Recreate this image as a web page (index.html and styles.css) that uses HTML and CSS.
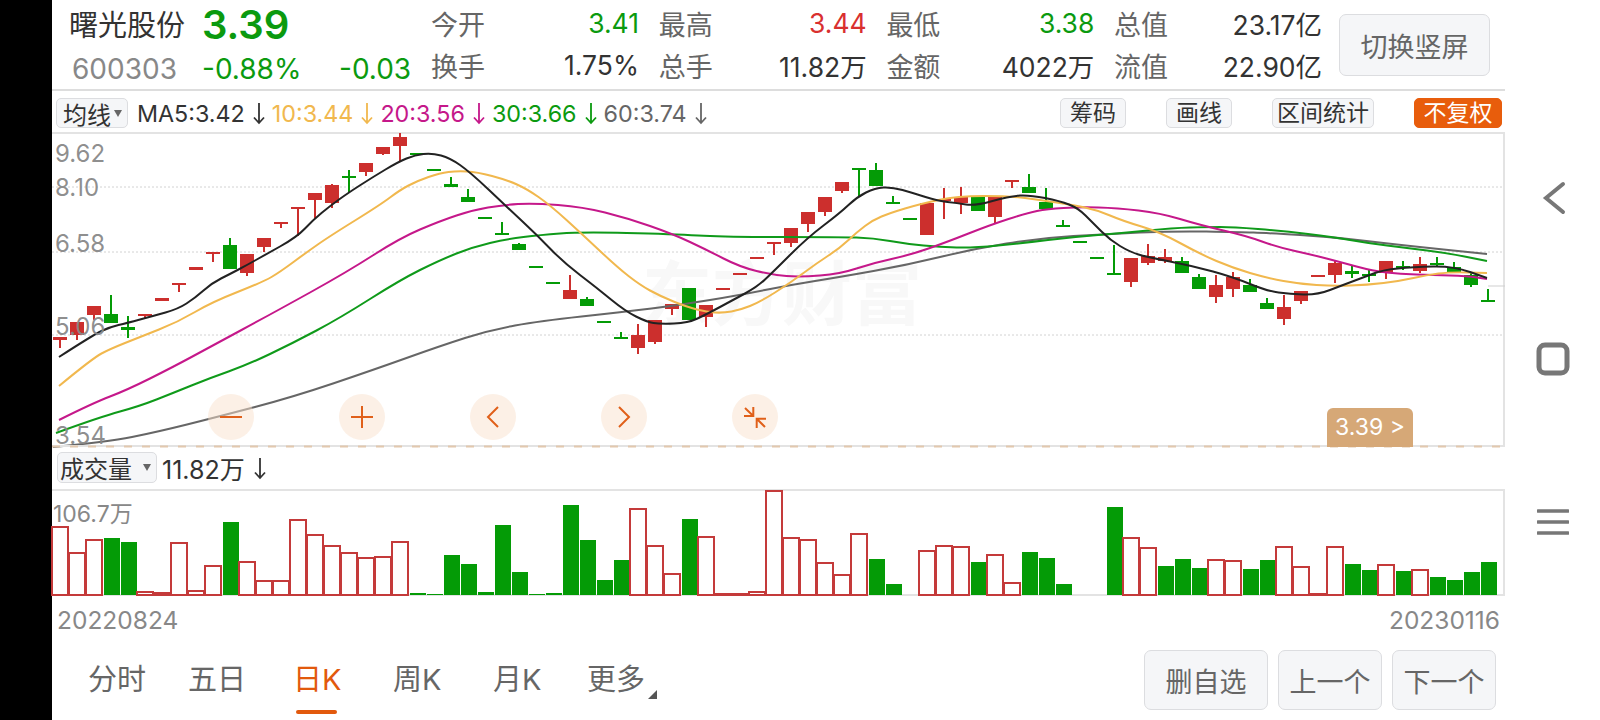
FILE: index.html
```html
<!DOCTYPE html>
<html lang="zh">
<head>
    <meta charset="utf-8">
    <title>曙光股份 600303</title>
    <link rel="stylesheet" href="styles.css">
</head>
<body>
    <svg class="defs">
        <symbol id="down" viewBox="0 0 12 24">
            <path d="M6 2V22M1 16.5L6 22L11 16.5" fill="none" stroke="currentColor" stroke-width="1.8"/>
        </symbol>
    </svg>
    <div class="edge"></div>
    <main class="main">
        <header class="quote">
            <div class="title">
                <div class="name">曙光股份</div>
                <div class="price">3.39</div>
                <div></div>
                <div class="code">600303</div>
                <div class="change">-0.88%</div>
                <div class="change">-0.03</div>
            </div>
            <div class="stats">
                <div class="stat"><span class="label">今开</span><span class="green">3.41</span></div>
                <div class="stat"><span class="label">最高</span><span class="red">3.44</span></div>
                <div class="stat"><span class="label">最低</span><span class="green">3.38</span></div>
                <div class="stat"><span class="label">总值</span><span>23.17亿</span></div>
                <div class="stat"><span class="label">换手</span><span>1.75%</span></div>
                <div class="stat"><span class="label">总手</span><span>11.82万</span></div>
                <div class="stat"><span class="label">金额</span><span>4022万</span></div>
                <div class="stat"><span class="label">流值</span><span>22.90亿</span></div>
            </div>
            <button class="btn switch">切换竖屏</button>
        </header>

        <div class="ma-row">
            <div class="pick pick-ma">均线<i class="caret"></i></div>
            <span class="ma ma5">MA5:3.42<svg class="arrow"><use href="#down"/></svg></span>
            <span class="ma ma10">10:3.44<svg class="arrow"><use href="#down"/></svg></span>
            <span class="ma ma20">20:3.56<svg class="arrow"><use href="#down"/></svg></span>
            <span class="ma ma30">30:3.66<svg class="arrow"><use href="#down"/></svg></span>
            <span class="ma ma60">60:3.74<svg class="arrow"><use href="#down"/></svg></span>
            <div class="tools">
                <div class="tool tool-short">筹码</div>
                <div class="tool tool-short">画线</div>
                <div class="tool tool-long">区间统计</div>
                <div class="tool tool-on">不复权</div>
            </div>
        </div>

        <div class="kline">
            <svg id="kline" width="1453" height="315"></svg>
            <div class="zooms">
                <div class="zoom"><svg viewBox="0 0 24 24"><path d="M1 12H23"/></svg></div>
                <div class="zoom"><svg viewBox="0 0 24 24"><path d="M1 12H23M12 1V23"/></svg></div>
                <div class="zoom"><svg viewBox="0 0 24 24"><path d="M17 2L7 12L17 22"/></svg></div>
                <div class="zoom"><svg viewBox="0 0 24 24"><path d="M7 2L17 12L7 22"/></svg></div>
                <div class="zoom"><svg viewBox="0 0 24 24"><path d="M2 3L10.3 11M1 11H10.3V2M22 22L13.7 13.7M23 13.7H13.7V23"/></svg></div>
            </div>
            <div class="last-price">3.39 &gt;</div>
        </div>

        <div class="vol-row">
            <div class="pick pick-vol">成交量<i class="caret"></i></div>
            <span class="vol-now">11.82万<svg class="arrow"><use href="#down"/></svg></span>
        </div>

        <div class="volume">
            <svg id="volume" width="1453" height="107"></svg>
            <div class="vol-max">106.7万</div>
        </div>

        <div class="dates">
            <span>20220824</span>
            <span>20230116</span>
        </div>

        <div class="bottom">
            <nav class="tabs">
                <a class="tab tab-a">分时</a>
                <a class="tab tab-b">五日</a>
                <a class="tab tab-c active">日K</a>
                <a class="tab tab-d">周K</a>
                <a class="tab tab-e">月K</a>
                <a class="tab more">更多</a>
            </nav>
            <div class="actions">
                <button class="btn del">删自选</button>
                <button class="btn step">上一个</button>
                <button class="btn step">下一个</button>
            </div>
        </div>
    </main>
    <aside class="sysnav">
        <svg width="24" height="36" viewBox="0 0 24 36"><path d="M21 4L4 18L21 32"/></svg>
        <svg width="34" height="34" viewBox="0 0 34 34"><rect x="3" y="3" width="28" height="28" rx="6"/></svg>
        <svg width="32" height="28" viewBox="0 0 32 28"><path d="M1 3H31M1 14H31M1 25H31"/></svg>
    </aside>
    <script src="chart.js"></script>
</body>
</html>
```

FILE: styles.css
```css
* {
    box-sizing: border-box;
}

html, body {
    height: 100%;
    overflow: hidden;
}

body {
    margin: 0;
    display: flex;
    width: 1600px;
    height: 720px;
    background: #fff;
    color: #333;
    font-family: Inter, "Noto Sans CJK SC", sans-serif;
}

.defs {
    position: absolute;
    width: 0;
    height: 0;
}

.edge {
    width: 52px;
    background: #000;
}

.main {
    width: 1453px;
    display: flex;
    flex-direction: column;
}

.green {
    color: #0b9a0f;
}

.red {
    color: #d9302f;
}

.btn {
    background: #f5f6f8;
    border: 1px solid #dcdde0;
    border-radius: 7px;
    color: #666;
    font-family: inherit;
    padding: 0;
}

/* header */
.quote {
    height: 91px;
    display: flex;
    border-bottom: 2px solid #ddd;
}

.title {
    width: 379px;
    padding-left: 17px;
    display: grid;
    grid-template-columns: 133px 137px 1fr;
    grid-template-rows: 50px 38px;
    align-items: center;
}

.name {
    font-size: 29px;
    line-height: 1;
}

.price {
    font-size: 40px;
    font-weight: 600;
    line-height: 1;
    color: #0b9a0f;
}

.code {
    padding-left: 3px;
    font-size: 28px;
    color: #888;
}

.change {
    font-size: 28px;
    color: #0b9a0f;
}

.stats {
    width: 890px;
    display: grid;
    grid-template-columns: repeat(4, 208px);
    grid-auto-rows: 42px;
    column-gap: 19.7px;
    padding-top: 2px;
}

.stat {
    display: flex;
    justify-content: space-between;
    align-items: center;
    font-size: 26.5px;
}

.label {
    font-size: 27px;
    color: #666;
}

.switch {
    width: 151px;
    height: 62px;
    margin: 14px 0 0 18px;
    font-size: 27px;
}

/* moving averages row */
.ma-row {
    height: 41px;
    display: flex;
    align-items: center;
    padding: 3px 3px 0 4px;
}

.pick {
    background: #f5f6f8;
    border: 1px solid #dcdde0;
    border-radius: 5px;
    display: flex;
    align-items: center;
}

.pick-ma {
    width: 72px;
    height: 30px;
    margin-right: 9px;
    padding-left: 6px;
    font-size: 24px;
}

.caret {
    width: 0;
    height: 0;
    margin-left: 3px;
    border: 4px solid transparent;
    border-top: 7px solid #666;
    border-bottom: 0;
}

.ma {
    display: flex;
    align-items: center;
    gap: 8px;
    margin-right: 7px;
    font-size: 23.3px;
}

.arrow {
    width: 12px;
    height: 24px;
}

.ma5 {
    color: #333;
}

.ma10 {
    color: #f1b84e;
}

.ma20 {
    color: #c5188a;
}

.ma30 {
    color: #0b9a0f;
}

.ma60 {
    color: #666;
}

.tools {
    margin-left: auto;
    display: flex;
    gap: 40px;
}

.tool {
    height: 30px;
    background: #f5f6f8;
    border: 1px solid #dcdde0;
    border-radius: 5px;
    font-size: 23px;
    line-height: 28px;
    text-align: center;
    white-space: nowrap;
}

.tool-short {
    width: 66px;
}

.tool-long {
    width: 102px;
}

.tool-on {
    width: 88px;
    background: #e85d0c;
    border-color: #e85d0c;
    color: #fff;
}

/* k line chart */
.kline {
    position: relative;
    height: 315px;
}

.kline svg, .volume svg {
    display: block;
    overflow: visible;
}

.zooms {
    position: absolute;
    left: 156px;
    top: 262px;
    display: flex;
    gap: 85px;
}

.zoom {
    width: 46px;
    height: 46px;
    border-radius: 50%;
    background: rgba(250, 225, 205, 0.5);
    display: flex;
    align-items: center;
    justify-content: center;
}

.zoom svg {
    width: 24px;
    height: 24px;
    fill: none;
    stroke: #e0601a;
    stroke-width: 2;
}

.last-price {
    position: absolute;
    left: 1275px;
    top: 276px;
    width: 86px;
    height: 39px;
    background: #d6a877;
    border-radius: 6px 6px 0 0;
    color: #fff;
    font-size: 23px;
    line-height: 38px;
    text-align: center;
}

/* volume chart */
.vol-row {
    height: 42px;
    display: flex;
    align-items: center;
    gap: 5px;
    padding: 0 0 1px 5px;
}

.pick-vol {
    width: 100px;
    height: 31px;
    padding-left: 2px;
    font-size: 24px;
}

.pick-vol .caret {
    margin-left: 11px;
}

.vol-now {
    display: flex;
    align-items: center;
    gap: 9px;
    font-size: 25px;
}

.volume {
    position: relative;
    height: 107px;
}

.vol-max {
    position: absolute;
    left: 1px;
    top: 6px;
    font-size: 23px;
    color: #888;
}

.dates {
    display: flex;
    justify-content: space-between;
    padding: 8px 5px 0 5px;
    font-size: 24.5px;
    line-height: 32px;
    color: #888;
}

/* bottom tabs */
.bottom {
    flex: 1;
    display: flex;
    justify-content: space-between;
}

.tabs {
    position: relative;
    flex: 1;
    font-size: 29px;
    color: #666;
}

.tab {
    position: absolute;
    top: 23px;
    line-height: 42px;
    white-space: nowrap;
}

.tab-a {
    left: 36px;
}

.tab-b {
    left: 136px;
}

.tab-c {
    left: 241px;
}

.tab-d {
    left: 341px;
}

.tab-e {
    left: 441px;
}

.more {
    left: 535px;
}

.more::after {
    content: "";
    position: absolute;
    right: -12px;
    bottom: 2px;
    border-left: 9px solid transparent;
    border-bottom: 9px solid #555;
}

.active {
    color: #e2590d;
}

.active::after {
    content: "";
    position: absolute;
    left: 3px;
    top: 51px;
    width: 41px;
    height: 4px;
    border-radius: 2px;
    background: #e2590d;
}

.actions {
    display: flex;
    gap: 10px;
    margin-right: 9px;
    padding-top: 14px;
}

.actions .btn {
    height: 60px;
    font-size: 27px;
}

.del {
    width: 124px;
}

.step {
    width: 104px;
}

/* android nav */
.sysnav {
    flex: 1;
    position: relative;
}

.sysnav svg {
    position: absolute;
    fill: none;
    stroke: #777;
    stroke-linecap: round;
}

.sysnav svg:nth-child(1) {
    left: 37px;
    top: 180px;
    stroke-width: 4;
}

.sysnav svg:nth-child(2) {
    left: 31px;
    top: 342px;
    stroke-width: 5;
}

.sysnav svg:nth-child(3) {
    left: 32px;
    top: 508px;
    stroke-width: 3.5;
}
```

FILE: chart.js
```js
// chart data read as screen y, the chart box starts at x=52 y=132
var RED = '#cc2f2d', GREEN = '#049b06';
var TOP = 132, VTOP = 489;

// color, wick top, wick bottom, body top, body bottom
var candles = [
    ['r',337,348,337,340],['r',322,340,322,335],['r',306,320,306,315],['g',295,323,314,323],['g',316,338,327,330],
    ['r',314,319,314,316],['r',298,301,298,301],['r',283,292,283,285],['r',267,270,267,270],['r',252,262,252,254],
    ['g',238,269,245,269],['r',254,276,254,273],['r',238,252,238,247],['r',222,228,222,224],['r',207,236,207,209],
    ['r',193,218,193,200],['r',184,208,185,203],['g',170,193,176,178],['r',163,176,163,172],['r',147,155,147,154],
    ['r',133,162,137,146],['g',153,154,153,154],['g',169,170,169,170],['g',177,187,184,187],['g',189,202,197,202],
    ['g',217,219,217,219],['g',222,235,233,235],['g',243,250,244,250],['g',266,267,266,267],['g',282,284,282,284],
    ['r',275,299,290,299],['g',297,306,299,306],['g',321,323,321,323],['g',332,339,337,339],['r',324,354,335,348],
    ['r',320,344,320,342],['r',304,315,304,309],['g',288,320,288,320],['r',305,327,305,317],['r',288,290,288,290],
    ['r',273,275,273,275],['r',257,259,257,259],['r',242,255,242,244],['r',228,247,228,243],['r',212,232,212,224],
    ['r',197,216,197,212],['r',182,193,182,191],['g',168,197,168,169],['g',163,186,170,186],['g',196,203,202,203],
    ['g',218,220,218,220],['r',203,235,203,235],['r',188,219,199,201],['r',187,214,197,203],['g',197,211,197,211],
    ['r',197,223,197,217],['r',180,188,180,182],['g',174,193,187,193],['g',188,209,202,209],['g',220,227,225,227],
    ['g',241,243,241,243],['g',257,259,257,259],['g',245,275,273,275],['r',258,287,258,282],['r',244,265,256,263],
    ['r',249,263,257,261],['g',257,273,261,273],['g',274,289,277,289],['r',275,303,285,297],['r',272,297,277,289],
    ['g',279,292,285,292],['g',298,309,303,309],['r',295,325,307,319],['r',291,304,291,301],['r',275,277,275,277],
    ['r',261,283,263,275],['g',265,278,271,274],['g',270,282,274,276],['r',261,279,261,273],['g',261,270,266,268],
    ['r',257,273,264,271],['g',257,267,263,265],['g',262,273,267,272],['g',272,287,275,285],['g',289,302,300,302]
];

// volume bar color + top y, one per candle
var bars = [
    'r527','r553','r540','g538','g542','r592','r593','r543','r591','r566','g522','r562','r581','r581','r520',
    'r535','r546','r553','r558','r557','r542','g593','g594','g555','g564','g592','g525','g572','g594','g593',
    'g505','g540','g580','g560','r509','r546','r574','g519','r537','r594','r594','r592','r491','r538','r540',
    'r563','r575','r534','g559','g584','g595','r551','r546','r547','g562','r555','r583','g552','g558','g584',
    'g595','g595','g507','r538','r548','g566','g559','g568','r560','r561','g569','g560','r547','r567','r594',
    'r547','g564','g570','r565','g571','r570','g577','g580','g572','g562'
];

var ma5 = [59,357,93,335,110,327,127,323,153,316,178,309,195,298,212,283,230,274,247,265,263,256,297,237,313,220,330,206,348,193,373,177,398,162,415,155,432,153,450,158,470,172,507,207,537,235,563,262,597,288,625,311,647,322,660,324,688,323,707,314,733,300,757,287,773,272,807,238,840,213,857,197,875,188,892,187,913,193,938,201,957,203,975,206,1010,196,1030,195,1060,201,1078,208,1093,223,1110,240,1130,252,1147,257,1193,266,1233,277,1267,291,1290,294,1317,295,1343,285,1367,276,1383,270,1413,267,1453,266,1487,278];
var ma10 = [59,386,93,358,110,349,140,337,178,322,212,302,263,282,280,272,307,252,330,236,380,205,400,190,417,181,440,173,457,171,477,172,507,180,527,189,550,205,583,235,617,267,640,285,660,296,687,307,707,312,723,313,740,310,760,302,790,283,817,263,840,248,857,232,873,220,890,213,920,204,957,196,1010,196,1040,200,1073,205,1097,210,1123,221,1160,232,1200,254,1233,268,1267,278,1300,284,1333,286,1367,285,1400,281,1427,275,1450,272,1487,273];
var ma20 = [59,420,93,403,127,390,173,367,210,347,273,313,347,272,400,238,440,221,473,210,503,205,533,203,583,207,627,218,673,234,707,250,740,267,773,275,800,277,840,274,873,263,910,255,947,242,990,225,1027,213,1047,209,1080,207,1117,208,1160,213,1200,225,1247,236,1277,247,1313,255,1340,262,1373,271,1400,274,1433,275,1467,276,1487,279];
var ma30 = [56,433,100,417,140,406,173,393,210,378,247,365,293,343,340,318,400,280,440,260,473,247,507,239,540,235,580,232,673,234,723,237,840,237,873,238,907,244,940,247,973,248,1023,243,1073,237,1123,233,1173,228,1207,227,1233,227,1283,231,1333,237,1367,243,1407,248,1447,253,1487,261];
var ma60 = [53,447,107,442,157,432,217,417,293,397,373,370,440,346,490,330,540,321,623,312,680,305,740,295,790,285,840,277,907,265,973,249,1040,238,1107,234,1173,231,1240,232,1267,233,1333,237,1400,245,1487,254];

var axis = [['9.62',153],['8.10',187],['6.58',243],['5.06',326],['3.54',435]];

// quadratic through midpoints so the averages come out smooth
function smooth(p) {
    var d = 'M' + (p[0] - 52) + ' ' + (p[1] - TOP);
    for (var i = 2; i < p.length - 2; i += 2) {
        var x = p[i] - 52, y = p[i + 1] - TOP;
        var mx = (x + p[i + 2] - 52) / 2, my = (y + p[i + 3] - TOP) / 2;
        d += 'Q' + x + ' ' + y + ' ' + mx + ' ' + my;
    }
    var n = p.length;
    return d + 'L' + (p[n - 2] - 52) + ' ' + (p[n - 1] - TOP);
}

function drawKline() {
    var h = '';
    h += '<path d="M0 1H1453M1452 0V315" stroke="#e3e3e3" stroke-width="2" fill="none"/>';
    [55, 120, 203].forEach(function (y) {
        h += '<path d="M0 ' + y + 'H1450" stroke="#d2d2d2" stroke-dasharray="2 2"/>';
    });
    h += '<text x="590" y="188" font-size="70" font-weight="700" fill="#f8f8f8" font-family="Noto Sans CJK SC">东方财富</text>';
    h += '<path d="M1436 154H1453" stroke="#cfcfcf"/>';

    candles.forEach(function (c, i) {
        var x = 8 + 17 * i, col = c[0] == 'r' ? RED : GREEN;
        var bh = Math.max(c[4] - c[3], 2);
        h += '<rect x="' + (x - 1) + '" y="' + (c[1] - TOP) + '" width="2" height="' + (c[2] - c[1]) + '" fill="' + col + '"/>';
        h += '<rect x="' + (x - 7) + '" y="' + (c[3] - TOP) + '" width="14" height="' + bh + '" fill="' + col + '"/>';
    });

    [[ma60, '#666'], [ma30, '#0f9a1a'], [ma20, '#c5188a'], [ma10, '#f1b84e'], [ma5, '#222']].forEach(function (l) {
        h += '<path d="' + smooth(l[0]) + '" fill="none" stroke="' + l[1] + '" stroke-width="2"/>';
    });

    axis.forEach(function (a) {
        h += '<text x="3" y="' + (a[1] - TOP + 9) + '" font-size="24" fill="#888" fill-opacity="0.95">' + a[0] + '</text>';
    });

    h += '<path d="M0 314H1453" stroke="#e3e3e3" stroke-width="2"/>';
    h += '<path d="M0 314.5H1453" stroke="#e2c8ae" stroke-width="2" stroke-dasharray="8 10"/>';
    document.getElementById('kline').innerHTML = h;
}

function drawVolume() {
    var h = '<path d="M0 1H1453M1452 0V107M0 106H1453" stroke="#e3e3e3" stroke-width="2" fill="none"/>';
    bars.forEach(function (b, i) {
        var top = parseInt(b.slice(1)) - VTOP, x = 17 * i;
        if (b[0] == 'g') {
            h += '<rect x="' + (x + 1) + '" y="' + top + '" width="16" height="' + (106 - top) + '" fill="' + GREEN + '"/>';
        } else {
            h += '<rect x="' + x + '" y="' + top + '" width="16" height="' + (106 - top) + '" fill="#fff" stroke="#c43a3a" stroke-width="2"/>';
        }
    });
    document.getElementById('volume').innerHTML = h;
}

drawKline();
drawVolume();
```
